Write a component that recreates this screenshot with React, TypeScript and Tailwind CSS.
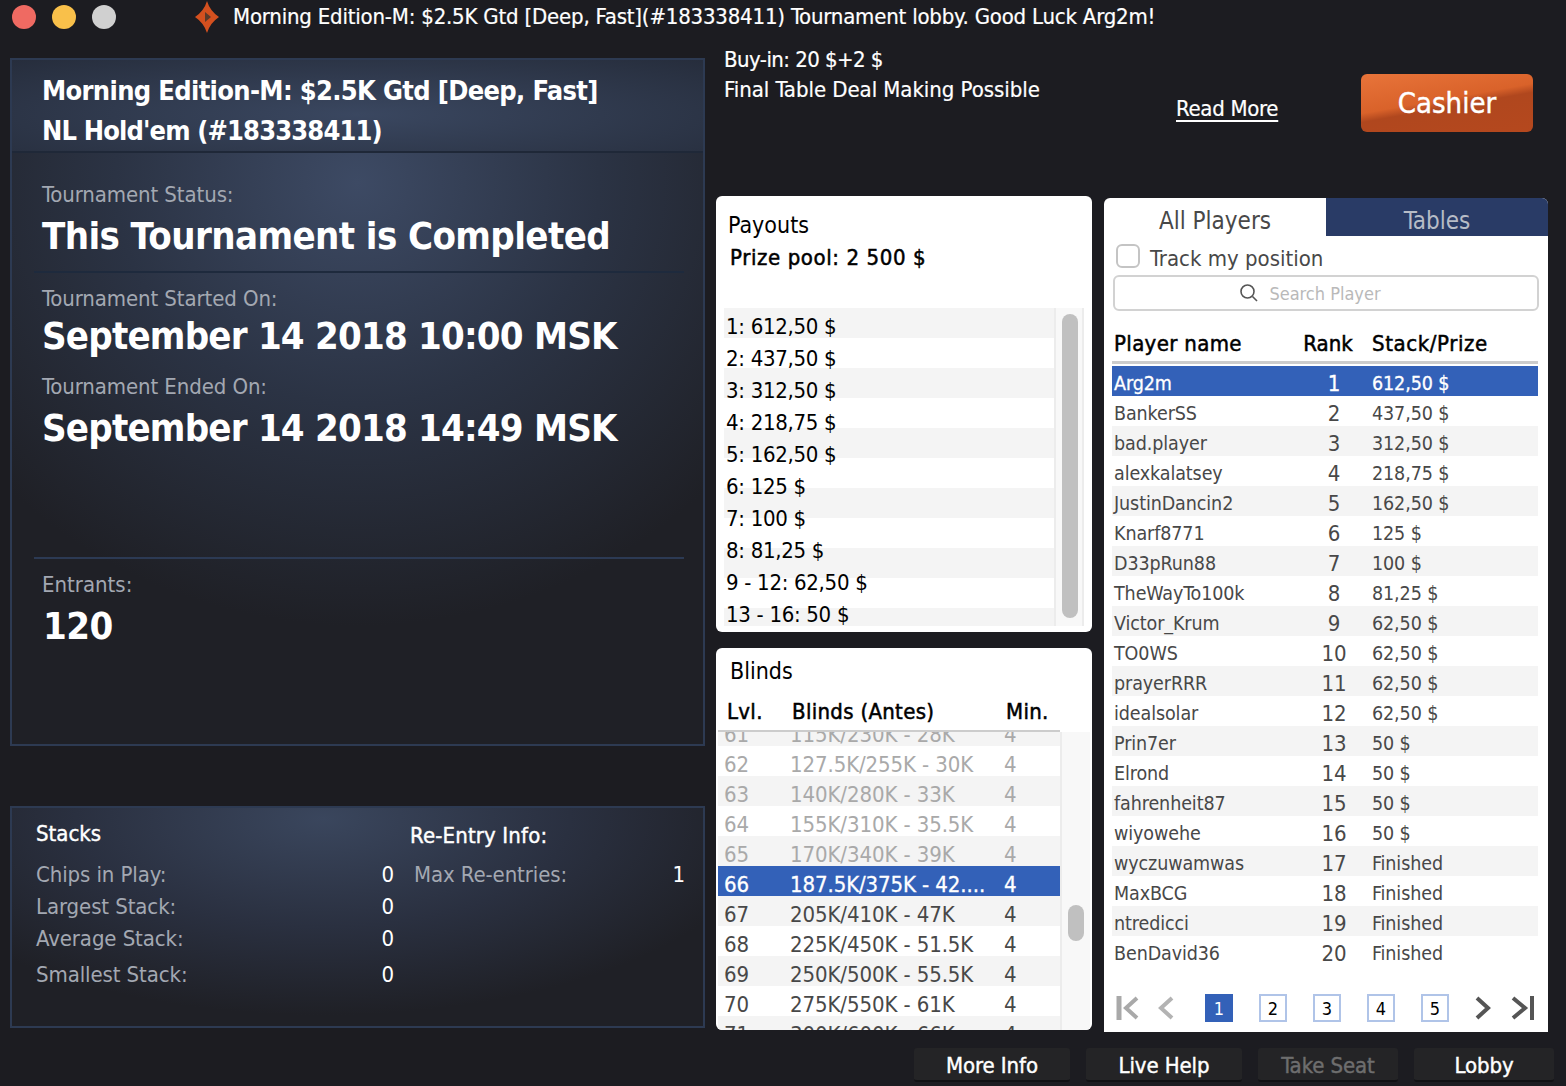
const players: [string, string][] = [
  ["Arg2m", "612,50 $"], ["BankerSS", "437,50 $"], ["bad.player", "312,50 $"], ["alexkalatsey", "218,75 $"],
  ["JustinDancin2", "162,50 $"], ["Knarf8771", "125 $"], ["D33pRun88", "100 $"], ["TheWayTo100k", "81,25 $"],
  ["Victor_Krum", "62,50 $"], ["TO0WS", "62,50 $"], ["prayerRRR", "62,50 $"], ["idealsolar", "62,50 $"],
  ["Prin7er", "50 $"], ["Elrond", "50 $"], ["fahrenheit87", "50 $"], ["wiyowehe", "50 $"],
  ["wyczuwamwas", "Finished"], ["MaxBCG", "Finished"], ["ntredicci", "Finished"], ["BenDavid36", "Finished"],
];
const payouts = ["1: 612,50 $", "2: 437,50 $", "3: 312,50 $", "4: 218,75 $", "5: 162,50 $", "6: 125 $", "7: 100 $", "8: 81,25 $", "9 - 12: 62,50 $", "13 - 16: 50 $"];
const blinds: [string, string][] = [
  ["61", "115K/230K - 28K"], ["62", "127.5K/255K - 30K"], ["63", "140K/280K - 33K"], ["64", "155K/310K - 35.5K"],
  ["65", "170K/340K - 39K"], ["66", "187.5K/375K - 42...."], ["67", "205K/410K - 47K"], ["68", "225K/450K - 51.5K"],
  ["69", "250K/500K - 55.5K"], ["70", "275K/550K - 61K"], ["71", "300K/600K - 66K"],
];
const stacks: [string, string, string][] = [
  ["Chips in Play:", "0", "h-[32px]"], ["Largest Stack:", "0", "h-[32px]"], ["Average Stack:", "0", "h-[36px]"], ["Smallest Stack:", "0", "h-[36px]"],
];

function Logo() {
  return (
    <svg width="26" height="34" viewBox="0 0 26 34" className="ml-[78px] mr-[13px]">
      <path d="M13 1 Q16 11 25 17 Q16 23 13 33 Q10 23 1 17 Q10 11 13 1 Z" fill="#d4501f" />
      <path d="M11 12 L17 17 L11 22 Z" fill="#5c3a2a" />
    </svg>
  );
}

function Chevron({ dir, bar, color }: { dir: "l" | "r"; bar?: boolean; color: string }) {
  const w = bar ? 26 : 16;
  return (
    <svg width={w} height="28" viewBox={`0 0 ${w} 28`} fill="none" stroke={color} strokeWidth="4">
      {dir === "l" ? (
        <>
          {bar && <path d="M4 2 V26" strokeWidth="5" />}
          <path d={bar ? "M22 4 L11 14 L22 24" : "M14 4 L3 14 L14 24"} />
        </>
      ) : (
        <>
          {bar && <path d="M22 2 V26" strokeWidth="4" />}
          <path d={bar ? "M3 4 L15 14 L3 24" : "M2 4 L13 14 L2 24"} />
        </>
      )}
    </svg>
  );
}

function FootButton({ label, w, dim }: { label: string; w: string; dim?: boolean }) {
  return (
    <div className={`${w} h-[34px] flex items-center justify-center pt-[3px] rounded-[3px] bg-[#242426] border-b-2 border-b-[#111114] text-[22px] tracking-[-0.1px] [-webkit-text-stroke:0.4px_currentColor] ${dim ? "text-[#6e6e6e]" : "text-white"}`}>
      {label}
    </div>
  );
}

export default function App() {
  return (
    <div className="w-[1566px] h-[1086px] overflow-hidden bg-[#1c1c21] text-white text-[22px] font-['DejaVu_Sans_Condensed','DejaVu_Sans',sans-serif]">
      <div className="h-[36px] flex items-center pb-[2px]">
        <div className="ml-[12px] flex gap-[16px]">
          <div className="w-[24px] h-[24px] rounded-full bg-[#ef6a62]" />
          <div className="w-[24px] h-[24px] rounded-full bg-[#f9c04a]" />
          <div className="w-[24px] h-[24px] rounded-full bg-[#d0d0d0]" />
        </div>
        <Logo />
        <div className="whitespace-nowrap leading-[28px] tracking-[-0.2px] [-webkit-text-stroke:0.2px_currentColor]">Morning Edition-M: $2.5K Gtd [Deep, Fast](#183338411) Tournament lobby. Good Luck Arg2m!</div>
      </div>

      <div className="flex pl-[10px] h-[1012px]">
        <div className="w-[695px] pt-[22px] shrink-0">
          <div className="h-[688px] border-2 border-[#2d3a52] flex flex-col">
            <div className="h-[93px] pt-[11px] pl-[30px] border-b-2 border-b-[#1f2838] bg-[radial-gradient(ellipse_at_50%_60%,#3a4760_0%,#262d3c_100%)] font-bold text-[27px] leading-[40px]">
              <div className="tracking-[-0.66px]">Morning Edition-M: $2.5K Gtd [Deep, Fast]</div>
              <div className="tracking-[-0.85px]">NL Hold'em (#183338411)</div>
            </div>
            <div className="flex-1 pl-[22px] pr-[19px] bg-[radial-gradient(ellipse_70%_75%_at_50%_5%,#3d4a64_0%,#2b3344_50%,#1f2026_100%)]">
              <div className="h-[120px] pt-[27px] border-b-2 border-b-[#1e2a3d]">
                <div className="pl-[8px] leading-[30px] tracking-[-0.1px] text-[#a3a8b2]">Tournament Status:</div>
                <div className="pl-[8px] leading-[50px] mt-[1px] font-bold text-[38px] tracking-[-0.6px]">This Tournament is Completed</div>
              </div>
              <div className="h-[286px] pt-[11px] border-b-2 border-b-[#2c3a54]">
                <div className="pl-[8px] leading-[30px] tracking-[-0.1px] text-[#a3a8b2]">Tournament Started On:</div>
                <div className="pl-[8px] -mt-[1px] leading-[46px] font-bold text-[38px] tracking-[-0.8px]">September 14 2018 10:00 MSK</div>
                <div className="pl-[8px] mt-[13px] leading-[30px] tracking-[-0.1px] text-[#a3a8b2]">Tournament Ended On:</div>
                <div className="pl-[8px] mt-[3px] leading-[46px] font-bold text-[38px] tracking-[-0.8px]">September 14 2018 14:49 MSK</div>
              </div>
              <div className="pt-[11px] pl-[8px]">
                <div className="leading-[30px] text-[#a3a8b2]">Entrants:</div>
                <div className="leading-[50px] mt-[1px] font-bold text-[38px] tracking-[-0.5px] pl-[1px]">120</div>
              </div>
            </div>
          </div>

          <div className="mt-[60px] h-[222px] border-2 border-[#2d3a52] flex bg-[radial-gradient(ellipse_65%_90%_at_45%_5%,#3a465d_0%,#2a3040_55%,#1f2026_100%)] pl-[24px] pr-[18px]">
            <div className="w-[358px]">
              <div className="pt-[11px] leading-[30px] [-webkit-text-stroke:0.4px_currentColor]">Stacks</div>
              <div className="mt-[11px]">
                {stacks.map(([l, v, h]) => (
                  <div key={l} className={`${h} flex justify-between items-start leading-[30px]`}>
                    <span className="text-[#a3a8b2] tracking-[-0.1px]">{l}</span>
                    <span>{v}</span>
                  </div>
                ))}
              </div>
            </div>
            <div className="flex-1 pl-[16px]">
              <div className="pt-[13px] leading-[30px] [-webkit-text-stroke:0.4px_currentColor] tracking-[0.15px]">Re-Entry Info:</div>
              <div className="mt-[9px] flex justify-between leading-[30px] pl-[4px]">
                <span className="text-[#a3a8b2] tracking-[-0.1px]">Max Re-entries:</span>
                <span>1</span>
              </div>
            </div>
          </div>
        </div>

        <div className="ml-[11px] w-[832px] shrink-0 flex flex-col">
          <div className="h-[160px] pl-[8px] pr-[15px] flex items-start">
            <div className="w-[452px] pt-[9px] [-webkit-text-stroke:0.2px_currentColor]">
              <div className="leading-[30px] tracking-[-0.55px]">Buy-in: 20 $+2 $</div>
              <div className="leading-[30px] tracking-[-0.05px]">Final Table Deal Making Possible</div>
            </div>
            <div className="mt-[57px] pt-[1px] leading-[30px] underline underline-offset-4 tracking-[-0.3px] [-webkit-text-stroke:0.2px_currentColor]">Read More</div>
            <div className="ml-auto mt-[38px] pt-[2px] w-[172px] h-[58px] rounded-[6px] flex items-center justify-center text-[29px] [-webkit-text-stroke:0.4px_currentColor] bg-[linear-gradient(170deg,#e8743a_0%,#d9622a_45%,#b0471e_55%,#b5481e_100%)]">Cashier</div>
          </div>

          <div className="flex gap-[12px] items-start">
            <div className="w-[376px] flex flex-col gap-[16px] text-black">
              <div className="h-[436px] bg-white rounded-[6px] flex flex-col">
                <div className="h-[112px] pl-[12px] pt-[14px]">
                  <div className="leading-[32px] text-[23px] -mt-[1px]">Payouts</div>
                  <div className="leading-[32px] pl-[2px] mt-[1px] tracking-[0.6px] [-webkit-text-stroke:0.5px_currentColor]">Prize pool: 2 500 $</div>
                </div>
                <div className="mx-[8px] h-[318px] flex overflow-hidden">
                  <div className="w-[330px] pt-[3px] pl-[2px] bg-[repeating-linear-gradient(180deg,#f4f4f4_0,#f4f4f4_30px,#ffffff_30px,#ffffff_60px)]">
                    {payouts.map((p) => (
                      <div key={p} className="h-[32px] leading-[32px] tracking-[-0.3px]">{p}</div>
                    ))}
                  </div>
                  <div className="w-[30px] bg-[#f8f8f8] border-l-2 border-l-[#ececec] border-r-2 border-r-[#ececec] pt-[6px] pl-[6px]">
                    <div className="w-[16px] h-[304px] rounded-full bg-[#c0c0c0]" />
                  </div>
                </div>
              </div>

              <div className="h-[382px] bg-white rounded-[6px] flex flex-col overflow-hidden">
                <div className="h-[46px] pl-[14px] pt-[7px] leading-[32px] text-[23px]">Blinds</div>
                <div className="h-[38px] ml-[2px] w-[342px] pt-[1px] border-b-2 border-b-[#cccccc] flex tracking-[0.3px] [-webkit-text-stroke:0.5px_currentColor] leading-[34px]">
                  <div className="w-[74px] pl-[9px]">Lvl.</div>
                  <div className="w-[214px]">Blinds (Antes)</div>
                  <div>Min.</div>
                </div>
                <div className="flex-1 flex overflow-hidden">
                  <div className="ml-[2px] w-[342px] overflow-hidden">
                    <div className="-mt-[16px]">
                      {blinds.map(([l, b], i) => {
                        const sel = l === "66";
                        const past = i < 5;
                        return (
                          <div key={l} className={`h-[30px] pt-[4px] flex leading-[30px] ${sel ? "bg-[#3361b8] text-white [-webkit-text-stroke:0.3px_currentColor]" : i % 2 === 0 ? "bg-[#f4f4f4]" : "bg-white"} ${past ? "text-[#a9a9a9]" : sel ? "" : "text-[#484848]"}`}>
                            <div className="w-[72px] pl-[6px]">{l}</div>
                            <div className="w-[214px] whitespace-nowrap tracking-[-0.1px]">{b}</div>
                            <div>4</div>
                          </div>
                        );
                      })}
                    </div>
                  </div>
                  <div className="w-[30px] bg-[#f8f8f8] border-l-2 border-l-[#ececec] pt-[173px] pl-[6px]">
                    <div className="w-[16px] h-[36px] rounded-full bg-[#c0c0c0]" />
                  </div>
                </div>
              </div>
            </div>

            <div className="w-[444px] mt-[2px] h-[834px] bg-white rounded-t-[6px] text-[#484848] flex flex-col">
              <div className="h-[38px] flex text-[24px]">
                <div className="w-[222px] flex items-center justify-center pt-[8px] leading-[32px]">All Players</div>
                <div className="w-[222px] flex items-center justify-center pt-[8px] bg-[#293b66] text-[#b7bcc6] rounded-tr-[6px] leading-[32px]">Tables</div>
              </div>
              <div className="h-[39px] flex items-center pl-[12px]">
                <div className="w-[24px] h-[24px] rounded-[6px] border-2 border-[#c4c4c4] mr-[10px]" />
                <span className="leading-[30px] pt-[6px]">Track my position</span>
              </div>
              <div className="mx-[9px] h-[36px] rounded-[6px] border-2 border-[#d2d2d2] flex items-center justify-center pr-[32px] text-[18px] text-[#b9b9b9]">
                <svg width="20" height="20" viewBox="0 0 20 20" fill="none" stroke="#555" strokeWidth="1.6" className="mr-[10px]">
                  <circle cx="8.5" cy="8.5" r="6.5" />
                  <path d="M13.5 13.5 L18 18" />
                </svg>
                Search Player
              </div>
              <div className="ml-[8px] mr-[10px] mt-[16px] h-[37px] border-b-[3px] border-b-[#cccccc] flex text-black [-webkit-text-stroke:0.5px_currentColor] leading-[34px]">
                <div className="w-[191px] pl-[2px] tracking-[0.35px]">Player name</div>
                <div className="w-[62px] pr-[12px] text-center whitespace-nowrap">Rank</div>
                <div className="pl-[7px] whitespace-nowrap tracking-[0.6px]">Stack/Prize</div>
              </div>
              <div className="ml-[8px] mr-[10px] mt-[2px] h-[620px] overflow-hidden bg-[repeating-linear-gradient(180deg,#ffffff_0,#ffffff_30px,#f4f4f4_30px,#f4f4f4_60px)]">
                {players.map(([n, s], i) => (
                  <div key={n} className={`h-[30px] flex leading-[30px] ${i === 0 ? "bg-[#3361b8] text-white [-webkit-text-stroke:0.3px_currentColor]" : i % 2 === 0 ? "bg-[#f4f4f4]" : "bg-white"}`}>
                    <div className="w-[191px] pl-[2px] pt-[3px] text-[19.5px] tracking-[-0.1px] whitespace-nowrap">{n}</div>
                    <div className="w-[62px] pt-[3px] text-center">{i + 1}</div>
                    <div className="pl-[7px] pt-[3px] text-[19.5px] tracking-[-0.1px]">{s}</div>
                  </div>
                ))}
              </div>
              <div className="flex-1 flex items-start pt-[8px] pl-[11px]">
                <Chevron dir="l" bar color="#a9a9a9" />
                <div className="ml-[17px]"><Chevron dir="l" color="#b3b3b3" /></div>
                <div className="ml-[31px] flex gap-[26px]">
                  {[1, 2, 3, 4, 5].map((n) => (
                    <div key={n} className={`w-[28px] h-[28px] flex items-center justify-center text-[18px] leading-[28px] pt-[2px] border-2 ${n === 1 ? "bg-[#3361b8] border-[#3361b8] text-white" : "border-[#b0c4e8] text-black"}`}>{n}</div>
                  ))}
                </div>
                <div className="ml-[26px]"><Chevron dir="r" color="#555555" /></div>
                <div className="ml-[19px]"><Chevron dir="r" bar color="#555555" /></div>
              </div>
            </div>
          </div>
        </div>
      </div>

      <div className="h-[38px] flex justify-end items-start gap-[16px] pr-[12px]">
        <FootButton label="More Info" w="w-[156px]" />
        <FootButton label="Live Help" w="w-[156px]" />
        <FootButton label="Take Seat" w="w-[140px]" dim />
        <FootButton label="Lobby" w="w-[140px]" />
      </div>
    </div>
  );
}
